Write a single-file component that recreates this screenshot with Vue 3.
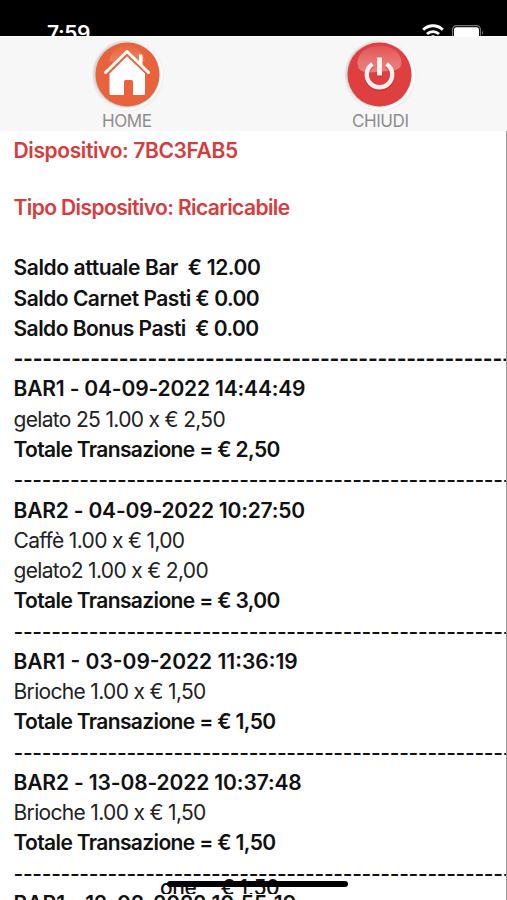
<script setup>
const balances = [
  { text: 'Saldo attuale Bar\u00a0 € 12.00', tracking: -0.38 },
  { text: 'Saldo Carnet Pasti € 0.00', tracking: -0.5 },
  { text: 'Saldo Bonus Pasti\u00a0 € 0.00', tracking: -0.54 },
]
const records = [
  { head: 'BAR1 - 04-09-2022 14:44:49', tracking: -0.17, items: ['gelato 25 1.00 x € 2,50'], total: '2,50' },
  { head: 'BAR2 - 04-09-2022 10:27:50', tracking: -0.19, items: ['Caffè 1.00 x € 1,00', 'gelato2 1.00 x € 2,00'], total: '3,00' },
  { head: 'BAR1 - 03-09-2022 11:36:19', tracking: 0, items: ['Brioche 1.00 x € 1,50'], total: '1,50' },
  { head: 'BAR2 - 13-08-2022 10:37:48', tracking: -0.13, items: ['Brioche 1.00 x € 1,50'], total: '1,50' },
  { head: 'BAR1 - 12-08-2022 10:55:19', tracking: -0.04, items: [], total: null },
]
const dashCount = 54
</script>

<template>
  <main class="screen">
    <header class="status">
      <span class="time">7:59</span>
      <svg class="wifi" viewBox="0 0 22 16" width="22" height="16">
        <g fill="none" stroke="#fff" stroke-width="2.9">
          <path d="M1.2 5.8C6.7.4 15.3.4 20.8 5.8" />
          <path d="M5 10C8.4 6.8 13.6 6.8 17 10" />
        </g>
        <path d="M8 12.6q3-2.6 6 0l-3 3z" fill="#fff" />
      </svg>
      <svg class="battery" viewBox="0 0 32 16" width="32" height="16">
        <rect x=".6" y=".6" width="27.8" height="14.8" rx="4" fill="none" stroke="#757575" stroke-width="1.2" />
        <rect x="2" y="2.2" width="25" height="12" rx="2.5" fill="#fff" />
        <path d="M30 5.5q2 2.3 0 4.6z" fill="#777" />
      </svg>
    </header>

    <nav class="toolbar">
      <div class="action">
        <svg viewBox="0 0 76 76" width="76" height="76">
          <defs>
            <linearGradient id="rim" x1="0" y1="0" x2="1" y2="1">
              <stop offset="0" stop-color="#d9d9d9" /><stop offset=".3" stop-color="#fff" />
              <stop offset=".75" stop-color="#fff" /><stop offset="1" stop-color="#cfcfcf" />
            </linearGradient>
            <linearGradient id="gloss" x1="0" y1="0" x2="0" y2="1">
              <stop offset="0" stop-color="#fff" stop-opacity=".04" /><stop offset="1" stop-color="#fff" stop-opacity=".2" />
            </linearGradient>
            <filter id="soft" x="-20%" y="-20%" width="140%" height="140%"><feGaussianBlur stdDeviation="1.2" /></filter>
          </defs>
          <circle cx="39" cy="38.5" r="34.5" fill="#ddd" filter="url(#soft)" />
          <circle cx="39" cy="38.5" r="34.3" fill="#fff" stroke="url(#rim)" />
          <circle cx="37.5" cy="37.5" r="33" fill="#c8c8c8" filter="url(#soft)" />
          <circle cx="38.5" cy="37.5" r="32" fill="#e8633c" />
          <path d="M20 24C24 4 52 4 56 24q-17 5-36 0z" fill="url(#gloss)" />
          <path d="M50 17.5h3.5v13l-3.5-3z" fill="#fff" />
          <path d="M20.5 36.5 38 19.5l18 17v20q0 1.5-1.5 1.5H44V44.5q0-1.5-1.5-1.5h-6q-1.5 0-1.5 1.5V58H22q-1.5 0-1.5-1.5z" fill="#fff" />
          <path d="M17 37.5 38 17l21.5 20.5" fill="none" stroke="#e8633c" stroke-width="2.4" />
          <path d="M16.500 35.500 38 14.500l21.500 21" fill="none" stroke="#fff" stroke-width="3" stroke-linecap="round" stroke-linejoin="round" />
        </svg>
        <span>HOME</span>
      </div>
      <div class="action">
        <svg viewBox="0 0 76 76" width="76" height="76">
          <defs>
            <linearGradient id="redgloss" x1="0" y1="0" x2="0" y2="1">
              <stop offset="0" stop-color="#fff" stop-opacity=".1" /><stop offset=".6" stop-color="#fff" stop-opacity=".28" /><stop offset="1" stop-color="#fff" stop-opacity=".32" />
            </linearGradient>
          </defs>
          <circle cx="38.5" cy="38.5" r="34.5" fill="#ddd" filter="url(#soft)" />
          <circle cx="38.5" cy="38.5" r="34.3" fill="#fff" stroke="url(#rim)" />
          <circle cx="36.5" cy="37.5" r="32.5" fill="#c8c8c8" filter="url(#soft)" />
          <circle cx="37.500" cy="37.500" r="32" fill="#df403f" />
          <path d="M15.500 27C15.500 3 59.500 3 59.500 26C59.500 33 51 34 45 34L28 35.500Q16 36 15.500 27z" fill="url(#redgloss)" />
          <g fill="none">
            <path d="M30.500 28.500A12.700 12.700 0 1 0 44.500 28.500M37.500 23v17" stroke="#a92728" stroke-width="4.400" opacity=".55" />
            <path d="M30.500 27A12.700 12.700 0 1 0 44.500 27" stroke="#fff0ef" stroke-width="4.400" />
            <path d="M37.500 20.500v18" stroke="#fff0ef" stroke-width="5" />
          </g>
        </svg>
        <span>CHIUDI</span>
      </div>
    </nav>

    <section class="content">
      <p class="device">Dispositivo: 7BC3FAB5</p>
      <p class="device type">Tipo Dispositivo: Ricaricabile</p>
      <div class="list">
        <p v-for="b in balances" :key="b.text" class="balance" :style="{ letterSpacing: b.tracking + 'px' }">{{ b.text }}</p>
        <p class="rule strong"><span v-for="n in dashCount" :key="n">-</span></p>
        <template v-for="r in records" :key="r.head">
          <p class="head" :style="{ letterSpacing: r.tracking + 'px' }">{{ r.head }}</p>
          <p v-for="i in r.items" :key="i" class="item">{{ i }}</p>
          <template v-if="r.total">
            <p class="total">Totale Transazione = € {{ r.total }}</p>
            <p class="rule"><span v-for="n in dashCount" :key="n">-</span></p>
          </template>
        </template>
      </div>
    </section>
    <div class="remnant"><span>one</span><span class="amount">€ 1,50</span></div>
    <div class="indicator"></div>
  </main>
</template>

<style>
body { background: #fff; }
</style>

<style scoped>
.screen { position: relative; display: flex; flex-direction: column; width: 507px; height: 900px; overflow: hidden; background: #fff; font-family: Inter, "Liberation Sans", sans-serif; color: #111; }
.status { display: flex; align-items: flex-start; flex: none; box-sizing: border-box; height: 36px; padding: 0 23px 0 47px; background: #000; overflow: hidden; }
.time { margin-top: 21px; color: #fff; font-size: 21px; line-height: 26px; font-weight: 600; letter-spacing: -.4px; }
.wifi { margin: 24px 8px 0 auto; flex: none; }
.battery { margin-top: 25px; flex: none; }
.toolbar { display: flex; flex: none; box-sizing: border-box; height: 95px; padding-top: 1px; border-top: 1px solid #fff; background: #f7f7f7; }
.action { flex: 1; display: flex; flex-direction: column; align-items: center; color: #8d8d8d; font-size: 17px; line-height: 20px; letter-spacing: -.4px; }
.action svg { flex: none; margin-top: -1px; margin-bottom: -2px; }
.content { flex: 1; min-height: 0; box-sizing: border-box; padding: 4.6px 0 0 13.5px; border-right: 1px solid #999; overflow: hidden; }
p { margin: 0; height: 30.27px; line-height: 30.27px; font-size: 21px; white-space: pre; }
.device { color: #d63c3c; font-weight: 600; letter-spacing: -.38px; }
.type { margin-top: 26.7px; letter-spacing: -.6px; }
.list { margin-top: 30.6px; }
.balance, .head, .total { font-weight: 600; }
.total { letter-spacing: -.64px; }
.item { letter-spacing: -.67px; color: #222; }
.rule { display: flex; font-weight: 500; }
.rule span { flex: none; width: 9.42px; }
.rule.strong { font-weight: 700; }
.rule.strong span { width: 9.59px; }
.remnant { position: absolute; left: 160px; top: 874px; display: flex; gap: 24px; height: 20px; overflow: hidden; font-size: 21px; line-height: 28px; font-weight: 500; letter-spacing: -.4px; white-space: pre; }
.indicator { position: absolute; left: 167px; top: 881px; width: 181px; height: 6px; border-radius: 3px; background: #000; }
</style>
